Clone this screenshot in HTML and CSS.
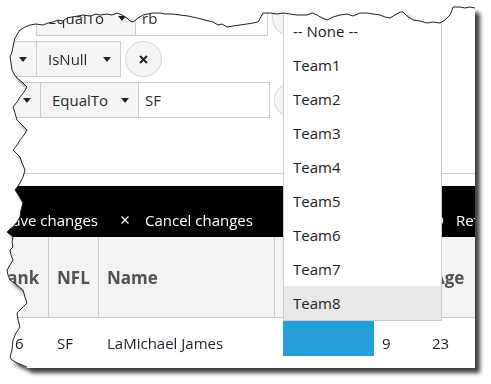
FILE: index.html
```html
<!DOCTYPE html>
<html lang="en">

<head>
    <meta charset="UTF-8">
    <meta name="viewport" content="width=device-width, initial-scale=1.0">
    <title>Grid batch edit</title>
    <link rel="stylesheet" href="styles.css">
</head>

<body>
    <div class="shot">
        <div class="frame">
            <div class="paper">
                <!-- filter rows -->
                <div class="filters">
                    <div class="frow first">
                        <div class="fgroup">
                            <div class="seg op1"><span>EqualTo</span><i class="caret"></i></div>
                            <div class="seg input input1">rb</div>
                        </div>
                        <div class="fbtn"></div>
                    </div>
                    <div class="frow shift">
                        <div class="fgroup">
                            <div class="seg prev2"><i class="caret"></i></div>
                            <div class="seg op2"><span>IsNull</span><i class="caret"></i></div>
                        </div>
                        <div class="fbtn">
                            <svg width="9" height="9" viewBox="0 0 9 9"><path d="M1 1L8 8M8 1L1 8" stroke="#222" stroke-width="2"/></svg>
                        </div>
                    </div>
                    <div class="frow shift">
                        <div class="fgroup">
                            <div class="seg prev3"><i class="caret"></i></div>
                            <div class="seg op3"><span>EqualTo</span><i class="caret"></i></div>
                            <div class="seg input input3">SF</div>
                        </div>
                        <div class="fbtn"></div>
                    </div>
                </div>

                <!-- toolbar -->
                <div class="toolbar">
                    <div class="tool save">Save changes</div>
                    <div class="tool cancel">
                        <svg width="8" height="8" viewBox="0 0 8 8"><path d="M0.5 0.5L7.5 7.5M7.5 0.5L0.5 7.5" stroke="#fff" stroke-width="1.3"/></svg>
                        Cancel changes
                    </div>
                    <div class="tool refresh">
                        <svg width="13" height="13" viewBox="0 0 13 13"><path d="M6.5 1.5A5 5 0 1 1 1.5 6.5" fill="none" stroke="#fff" stroke-width="1.5"/></svg>
                        Refresh
                    </div>
                </div>

                <!-- grid header -->
                <div class="grid-head">
                    <div class="th c-rank"><span>Rank</span></div>
                    <div class="th c-nfl">NFL</div>
                    <div class="th c-name">Name</div>
                    <div class="th c-team"></div>
                    <div class="th c-g"></div>
                    <div class="th c-age">Age</div>
                </div>

                <!-- grid row -->
                <div class="grid-row">
                    <div class="td c-rank">6</div>
                    <div class="td c-nfl">SF</div>
                    <div class="td c-name">LaMichael James</div>
                    <div class="td c-team"><span class="editor"></span></div>
                    <div class="td c-g">9</div>
                    <div class="td c-age">23</div>
                </div>

                <!-- open dropdown list -->
                <ul class="popup">
                    <li>-- None --</li>
                    <li>Team1</li>
                    <li>Team2</li>
                    <li>Team3</li>
                    <li>Team4</li>
                    <li>Team5</li>
                    <li>Team6</li>
                    <li>Team7</li>
                    <li class="hover">Team8</li>
                </ul>
            </div>
        </div>

        <!-- torn edge line -->
        <svg class="tear" width="491" height="384">
            <polyline fill="none" stroke="#222" stroke-width="1"
                points="27,367 22,365 17,363 12,360 10,357 12,350 13,340 16,333 20,327 18,320 17,313 22,308 27,303 25,297 23,290 17,285 10,280 8,275 7,270 10,265 13,260 11,255 10,250 13,247 12,242 13,237 7,232 10,229 13,227 17,222 20,217 21,210 23,203 19,196 15,190 18,186 20,183 23,177 25,170 22,163 20,157 16,153 13,150 17,145 20,140 24,135 27,130 22,125 17,120 15,113 13,107 17,102 20,97 24,92 27,87 22,82 17,78 14,74 12,70 11,63 10,57 12,52 13,47 14,42 15,38 18,33 20,30 25,27 30,25 36,24 43,25 48,23 53,22 58,20 63,21 67,18 72,17 78,16 83,15 90,16 96,14 100,15 107,14 112,15 117,13 122,15 127,18 130,21 133,22 138,18 143,15 148,14 153,13 160,13 165,14 172,14 180,15 188,16 197,18 205,20 213,22 218,25 222,24 227,27 233,26 240,25 247,24 253,23 258,22 263,13 270,13 277,14 283,13 290,14 297,15 307,15 312,13 317,15 322,18 327,20 333,17 340,15 347,14 353,16 360,13 367,13 373,14 380,15 385,17 390,18 395,15 400,12 403,12 407,16 413,20 420,21 427,23 433,22 440,23 445,20 450,15 452,10 453,7 460,7 465,8 470,7 475,8" />
        </svg>
    </div>
</body>

</html>
```

FILE: styles.css
```css
* {
    margin: 0;
    padding: 0;
    box-sizing: border-box;
}

li {
    list-style: none;
}

body {
    background: #fff;
    font-family: "Open Sans", "Noto Sans", sans-serif;
    color: #222;
}

.shot {
    position: relative;
    width: 491px;
    height: 384px;
}

.frame {
    width: 475px;
    height: 368px;
    filter: drop-shadow(5px 5px 2px rgba(0, 0, 0, 0.75));
}

.paper {
    position: relative;
    width: 475px;
    height: 368px;
    background: #fff;
    overflow: hidden;
    clip-path: polygon(30px 25px, 36px 24px, 43px 25px, 48px 23px, 53px 22px, 58px 20px, 63px 21px, 67px 18px, 72px 17px, 78px 16px, 83px 15px, 90px 16px, 96px 14px, 100px 15px, 107px 14px, 112px 15px, 117px 13px, 122px 15px, 127px 18px, 130px 21px, 133px 22px, 138px 18px, 143px 15px, 148px 14px, 153px 13px, 160px 13px, 165px 14px, 172px 14px, 180px 15px, 188px 16px, 197px 18px, 205px 20px, 213px 22px, 218px 25px, 222px 24px, 227px 27px, 233px 26px, 240px 25px, 247px 24px, 253px 23px, 258px 22px, 263px 13px, 270px 13px, 277px 14px, 283px 13px, 290px 14px, 297px 15px, 307px 15px, 312px 13px, 317px 15px, 322px 18px, 327px 20px, 333px 17px, 340px 15px, 347px 14px, 353px 16px, 360px 13px, 367px 13px, 373px 14px, 380px 15px, 385px 17px, 390px 18px, 395px 15px, 400px 12px, 403px 12px, 407px 16px, 413px 20px, 420px 21px, 427px 23px, 433px 22px, 440px 23px, 445px 20px, 450px 15px, 452px 10px, 453px 7px, 460px 7px, 465px 8px, 470px 7px, 475px 8px, 475px 368px, 27px 368px, 22px 365px, 17px 363px, 12px 360px, 10px 357px, 12px 350px, 13px 340px, 16px 333px, 20px 327px, 18px 320px, 17px 313px, 22px 308px, 27px 303px, 25px 297px, 23px 290px, 17px 285px, 10px 280px, 8px 275px, 7px 270px, 10px 265px, 13px 260px, 11px 255px, 10px 250px, 13px 247px, 12px 242px, 13px 237px, 7px 232px, 10px 229px, 13px 227px, 17px 222px, 20px 217px, 21px 210px, 23px 203px, 19px 196px, 15px 190px, 18px 186px, 20px 183px, 23px 177px, 25px 170px, 22px 163px, 20px 157px, 16px 153px, 13px 150px, 17px 145px, 20px 140px, 24px 135px, 27px 130px, 22px 125px, 17px 120px, 15px 113px, 13px 107px, 17px 102px, 20px 97px, 24px 92px, 27px 87px, 22px 82px, 17px 78px, 14px 74px, 12px 70px, 11px 63px, 10px 57px, 12px 52px, 13px 47px, 14px 42px, 15px 38px, 18px 33px, 20px 30px, 25px 27px);
}

.tear {
    position: absolute;
    left: 0;
    top: 0;
    pointer-events: none;
}

/* filter rows */
.filters {
    height: 174px;
    border-bottom: 1px solid #ccc;
}

.frow {
    display: flex;
    height: 36px;
    margin-top: 5px;
}

.frow.first {
    margin-top: 0;
    margin-left: 36px;
}

.frow.shift {
    margin-left: -20px;
}

.fgroup {
    display: flex;
    height: 36px;
    border: 1px solid #ccc;
}

.seg {
    display: flex;
    align-items: center;
    justify-content: space-between;
    padding: 0 9px 0 11px;
    background: #f5f5f5;
    font-size: 15px;
    color: #2a2a2a;
    white-space: nowrap;
}

.seg + .seg {
    border-left: 1px solid #ccc;
}

.seg.input {
    background: #fff;
    padding: 0 6px;
}

.prev2 {
    width: 55px;
    justify-content: flex-end;
}

.prev3 {
    width: 59px;
    justify-content: flex-end;
}

.op1 {
    width: 98px;
}

.op2 {
    width: 84px;
}

.op3 {
    width: 98px;
}

.input1 {
    width: 132px;
}

.input3 {
    width: 131px;
}

.caret {
    width: 0;
    height: 0;
    border-left: 4px solid transparent;
    border-right: 4px solid transparent;
    border-top: 5px solid #222;
}

.fbtn {
    display: flex;
    align-items: center;
    justify-content: center;
    width: 37px;
    height: 36px;
    margin-left: 4px;
    border: 1px solid #d8d8d8;
    border-radius: 50%;
    background: #f5f5f5;
}

/* toolbar */
.toolbar {
    display: flex;
    align-items: flex-end;
    height: 51px;
    margin-top: 12px;
    padding: 0 0 7px 4px;
    background: #000;
    color: #fff;
    font-size: 15px;
    line-height: 20px;
    white-space: nowrap;
    overflow: hidden;
}

.tool {
    display: flex;
    align-items: center;
}

.tool svg {
    margin-right: 16px;
}

.cancel {
    margin-left: 23px;
}

.refresh {
    margin-left: 178px;
}

.refresh svg {
    margin-right: 12px;
}

/* grid */
.grid-head {
    display: flex;
    height: 81px;
    background: #f3f3f3;
    border-bottom: 1px solid #ccc;
    font-size: 17px;
    font-weight: 700;
    color: #525252;
}

.grid-row {
    display: flex;
    height: 50px;
    font-size: 15px;
    color: #1e1e2a;
}

.th,
.td {
    display: flex;
    align-items: center;
    flex-shrink: 0;
    white-space: nowrap;
    overflow: hidden;
}

.th {
    padding-left: 8px;
}

.th + .th {
    border-left: 1px solid #ccc;
}

.td {
    padding-left: 9px;
}

.c-rank {
    width: 48px;
}

.th.c-rank {
    padding-left: 0;
}

.th.c-rank span {
    margin-left: -4px;
}

.td.c-rank {
    padding-left: 15px;
}

.c-nfl {
    width: 50px;
}

.c-name {
    width: 176px;
}

.c-team {
    width: 100px;
}

.c-g {
    width: 50px;
}

.td.c-g {
    padding-left: 8px;
}

.c-age {
    width: 60px;
}

.th.c-age,
.td.c-age {
    padding-left: 8px;
}

.td.c-team {
    align-items: flex-start;
}

.editor {
    display: block;
    width: 91px;
    height: 35px;
    margin-top: 3px;
    background: #26a0da;
}

/* dropdown list */
.popup {
    position: absolute;
    left: 283px;
    top: 0;
    width: 159px;
    height: 321px;
    padding-top: 13px;
    border: 1px solid #ccc;
    background: #fff;
    font-size: 15px;
    color: #222;
}

.popup li {
    height: 34px;
    line-height: 34px;
    padding-left: 9px;
}

.popup li.hover {
    background: #e8e8e8;
}
```
